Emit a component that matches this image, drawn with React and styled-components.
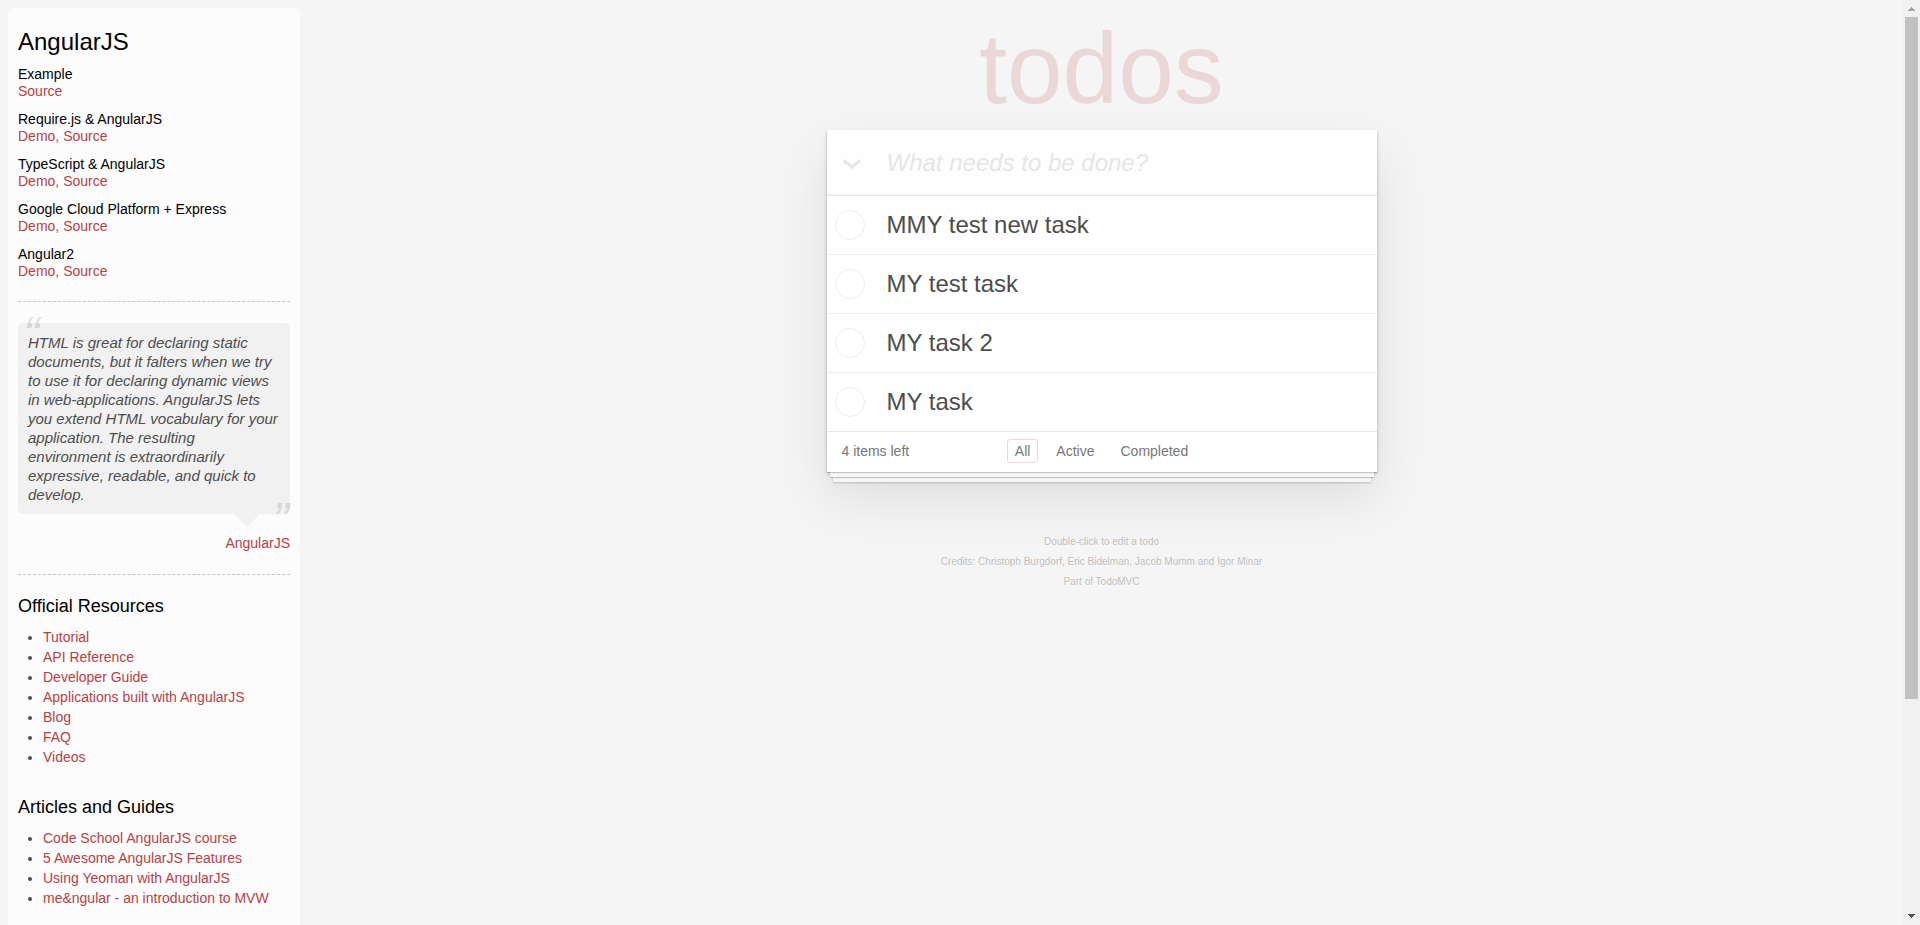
import React, { useState } from 'react';
import styled, { createGlobalStyle } from 'styled-components';

const GlobalStyle = createGlobalStyle`
  *, *::before, *::after { box-sizing: border-box; }
  body {
    margin: 0;
    background: #f5f5f5;
    color: #4d4d4d;
    font: 14px/20px "Liberation Sans", Arial, Helvetica, sans-serif;
  }
  button, input { font: inherit; color: inherit; }
`;

const Viewport = styled.div`
  display: flex;
  height: 100vh;
  overflow: hidden;
`;

const Learn = styled.aside`
  flex: none;
  width: 292px;
  min-height: calc(100vh - 8px);
  margin: 8px 0 0 8px;
  padding: 20px 10px 10px;
  border-radius: 5px 5px 0 0;
  background: #fcfcfc;
`;

const Title = styled.h3`
  margin: 0 0 10px;
  font-size: 24px;
  font-weight: 400;
  line-height: 28px;
  color: #000;
`;

const Example = styled.section`
  margin-bottom: 11px;
  line-height: 17px;
`;

const ExampleName = styled.h5`
  margin: 0;
  font-size: 14px;
  font-weight: 400;
  line-height: 17px;
  color: #000;
`;

const Link = styled.a`
  color: #b83f45;
  text-decoration: none;
  &:hover { text-decoration: underline; color: #787e7e; }
`;

const LinkRow = styled.div`
  color: #b83f45;
`;

const Divider = styled.hr`
  margin: 21px 0;
  border: 0;
  border-top: 1px dashed #c5c5c5;
`;

const Quote = styled.blockquote`
  margin: 0;
`;

const Bubble = styled.div`
  position: relative;
  padding: 10px;
  border-radius: 5px;
  background: #f1f1f1;

  &::after {
    content: '';
    position: absolute;
    top: 100%;
    right: 30px;
    border: 13px solid transparent;
    border-top-color: #f1f1f1;
  }
`;

const QuoteText = styled.p`
  margin: 0;
  font-size: 15px;
  font-style: italic;
  line-height: 19px;

  &::before, &::after {
    position: absolute;
    font-size: 50px;
    line-height: 65px;
    opacity: 0.15;
  }
  &::before { content: '“'; top: -20px; left: 5px; }
  &::after { content: '”'; bottom: -40px; right: 1px; }
`;

const QuoteSource = styled.footer`
  padding: 20px 0 0;
  line-height: 19px;
  text-align: right;
`;

const SectionTitle = styled.h4`
  margin: 0 0 10px;
  font-size: 18px;
  font-weight: 400;
  line-height: 21px;
  color: #000;
`;

const LinkList = styled.ul`
  margin: 0 0 30px 25px;
  padding: 0;
`;

const Main = styled.main`
  flex: 1;
  min-width: 0;
  display: flex;
  flex-direction: column;
  align-items: center;
`;

const Heading = styled.h1`
  margin: 0;
  padding-top: 6px;
  font-size: 100px;
  font-weight: 400;
  line-height: 124px;
  color: rgba(175, 47, 47, 0.15);
`;

const Card = styled.section`
  width: 100%;
  max-width: 550px;
  background: #fff;
  box-shadow:
    0 1px 1px rgba(0, 0, 0, 0.2),
    0 8px 0 -3px #f6f6f6,
    0 9px 1px -3px rgba(0, 0, 0, 0.2),
    0 16px 0 -6px #f6f6f6,
    0 17px 2px -6px rgba(0, 0, 0, 0.2),
    0 2px 4px 0 rgba(0, 0, 0, 0.2),
    0 25px 50px 0 rgba(0, 0, 0, 0.1);
`;

const EntryRow = styled.form`
  display: flex;
  height: 65px;
  background: #fefefe;
  box-shadow: inset 0 -2px 1px rgba(0, 0, 0, 0.03);
`;

const ToggleAll = styled.button`
  flex: none;
  display: flex;
  align-items: center;
  width: 60px;
  padding: 4px 0 0 16px;
  border: 0;
  background: none;
`;

const EntryInput = styled.input`
  flex: 1;
  min-width: 0;
  padding: 0 16px 0 0;
  border: 0;
  outline: 0;
  background: none;
  font-size: 24px;
  &::placeholder { color: #e6e6e6; font-style: italic; opacity: 1; }
`;

const TodoList = styled.ul`
  margin: 0;
  padding: 0;
  list-style: none;
`;

const TodoItem = styled.li`
  border-top: 1px solid ${(p) => (p.$first ? '#e6e6e6' : '#ededed')};
`;

const TodoLabel = styled.label`
  display: flex;
  align-items: center;
  gap: 22px;
  height: 58px;
  padding: 0 15px 0 8px;
  font-size: 24px;
`;

const Check = styled.input`
  appearance: none;
  flex: none;
  width: 30px;
  height: 30px;
  margin: 0;
  border: 1px solid #ededed;
  border-radius: 50%;
  &:checked { border-color: #bddad5; background: #f3faf8; }
`;

const CardFooter = styled.footer`
  display: grid;
  grid-template-columns: 1fr auto 1fr;
  align-items: center;
  height: 41px;
  padding: 0 15px 2px;
  border-top: 1px solid #e6e6e6;
  color: #777;
`;

const Filters = styled.nav`
  display: flex;
  gap: 10px;
`;

const Filter = styled.a`
  height: 24px;
  padding: 1px 7px;
  border: 1px solid ${(p) => (p.$active ? 'rgba(175, 47, 47, 0.2)' : 'transparent')};
  border-radius: 3px;
  color: inherit;
  text-decoration: none;
`;

const Info = styled.footer`
  margin-top: 60px;
  font-size: 10px;
  text-align: center;
  color: #bfbfbf;
  text-shadow: 0 1px 0 rgba(255, 255, 255, 0.5);
`;

const InfoLine = styled.p`
  margin: 0;
`;

const InfoLink = styled.a`
  color: inherit;
  text-decoration: none;
`;

const ScrollTrack = styled.div`
  flex: none;
  display: flex;
  flex-direction: column;
  width: 17px;
  background: #f1f1f1;
`;

const ScrollArrow = styled.svg`
  flex: none;
  width: 17px;
  height: 17px;
  fill: ${(p) => (p.$dim ? '#a3a3a3' : '#505050')};
`;

const ScrollThumb = styled.div`
  flex: 682;
  margin: 0 2px;
  background: #c1c1c1;
`;

const ScrollRest = styled.div`
  flex: 209;
`;

const examples = [
  { name: 'Example', links: ['Source'] },
  { name: 'Require.js & AngularJS', links: ['Demo', 'Source'] },
  { name: 'TypeScript & AngularJS', links: ['Demo', 'Source'] },
  { name: 'Google Cloud Platform + Express', links: ['Demo', 'Source'] },
  { name: 'Angular2', links: ['Demo', 'Source'] },
];

const resources = [
  {
    title: 'Official Resources',
    links: ['Tutorial', 'API Reference', 'Developer Guide', 'Applications built with AngularJS', 'Blog', 'FAQ', 'Videos'],
  },
  {
    title: 'Articles and Guides',
    links: [
      'Code School AngularJS course',
      '5 Awesome AngularJS Features',
      'Using Yeoman with AngularJS',
      'me&ngular - an introduction to MVW',
    ],
  },
];

const todos = ['MMY test new task', 'MY test task', 'MY task 2', 'MY task'];
const filters = ['All', 'Active', 'Completed'];

export default function App() {
  const [filter, setFilter] = useState('All');
  return (
    <>
      <GlobalStyle />
      <Viewport>
        <Learn>
          <Title>AngularJS</Title>
          {examples.map(({ name, links }) => (
            <Example key={name}>
              <ExampleName>{name}</ExampleName>
              <LinkRow>
                {links.map((l, i) => (
                  <React.Fragment key={l}>
                    {i > 0 && ', '}
                    <Link href="#">{l}</Link>
                  </React.Fragment>
                ))}
              </LinkRow>
            </Example>
          ))}
          <Divider />
          <Quote>
            <Bubble>
              <QuoteText>
                HTML is great for declaring static documents, but it falters when we try to use it for
                declaring dynamic views in web-applications. AngularJS lets you extend HTML vocabulary for
                your application. The resulting environment is extraordinarily expressive, readable, and
                quick to develop.
              </QuoteText>
            </Bubble>
            <QuoteSource>
              <Link href="#">AngularJS</Link>
            </QuoteSource>
          </Quote>
          <Divider />
          {resources.map(({ title, links }) => (
            <React.Fragment key={title}>
              <SectionTitle>{title}</SectionTitle>
              <LinkList>
                {links.map((l) => (
                  <li key={l}>
                    <Link href="#">{l}</Link>
                  </li>
                ))}
              </LinkList>
            </React.Fragment>
          ))}
        </Learn>

        <Main>
          <Heading>todos</Heading>
          <Card>
            <EntryRow onSubmit={(e) => e.preventDefault()}>
              <ToggleAll type="button" aria-label="Mark all as complete">
                <svg width="18" height="11" viewBox="0 0 18 11" fill="#e6e6e6">
                  <path d="M0.3 0 C3 1.4 6 3.4 8.9 6.2 C11.8 3.4 14.6 1.4 17.3 0 V3.6 C14.2 5.4 11.4 7.8 8.9 10.8 C6.4 7.8 3.4 5.4 0.3 3.6 Z" />
                </svg>
              </ToggleAll>
              <EntryInput type="text" placeholder="What needs to be done?" aria-label="New todo" />
            </EntryRow>
            <TodoList>
              {todos.map((t, i) => (
                <TodoItem key={t} $first={i === 0}>
                  <TodoLabel>
                    <Check type="checkbox" />
                    {t}
                  </TodoLabel>
                </TodoItem>
              ))}
            </TodoList>
            <CardFooter>
              <span>4 items left</span>
              <Filters>
                {filters.map((f) => (
                  <Filter key={f} href="#" $active={f === filter} onClick={() => setFilter(f)}>
                    {f}
                  </Filter>
                ))}
              </Filters>
            </CardFooter>
          </Card>
          <Info>
            <InfoLine>Double-click to edit a todo</InfoLine>
            <InfoLine>
              Credits: <InfoLink href="#">Christoph Burgdorf</InfoLink>, <InfoLink href="#">Eric Bidelman</InfoLink>,{' '}
              <InfoLink href="#">Jacob Mumm</InfoLink> and <InfoLink href="#">Igor Minar</InfoLink>
            </InfoLine>
            <InfoLine>
              Part of <InfoLink href="#">TodoMVC</InfoLink>
            </InfoLine>
          </Info>
        </Main>

        <ScrollTrack aria-hidden="true">
          <ScrollArrow $dim viewBox="0 0 17 17" shapeRendering="crispEdges">
            <path d="M8 7h1v1h1v1h1v1h1v1H5v-1h1V9h1V8h1z" />
          </ScrollArrow>
          <ScrollThumb />
          <ScrollRest />
          <ScrollArrow viewBox="0 0 17 17" shapeRendering="crispEdges">
            <path d="M5 6h7v1h-1v1h-1v1H9v1H8V9H7V8H6V7H5z" />
          </ScrollArrow>
        </ScrollTrack>
      </Viewport>
    </>
  );
}
